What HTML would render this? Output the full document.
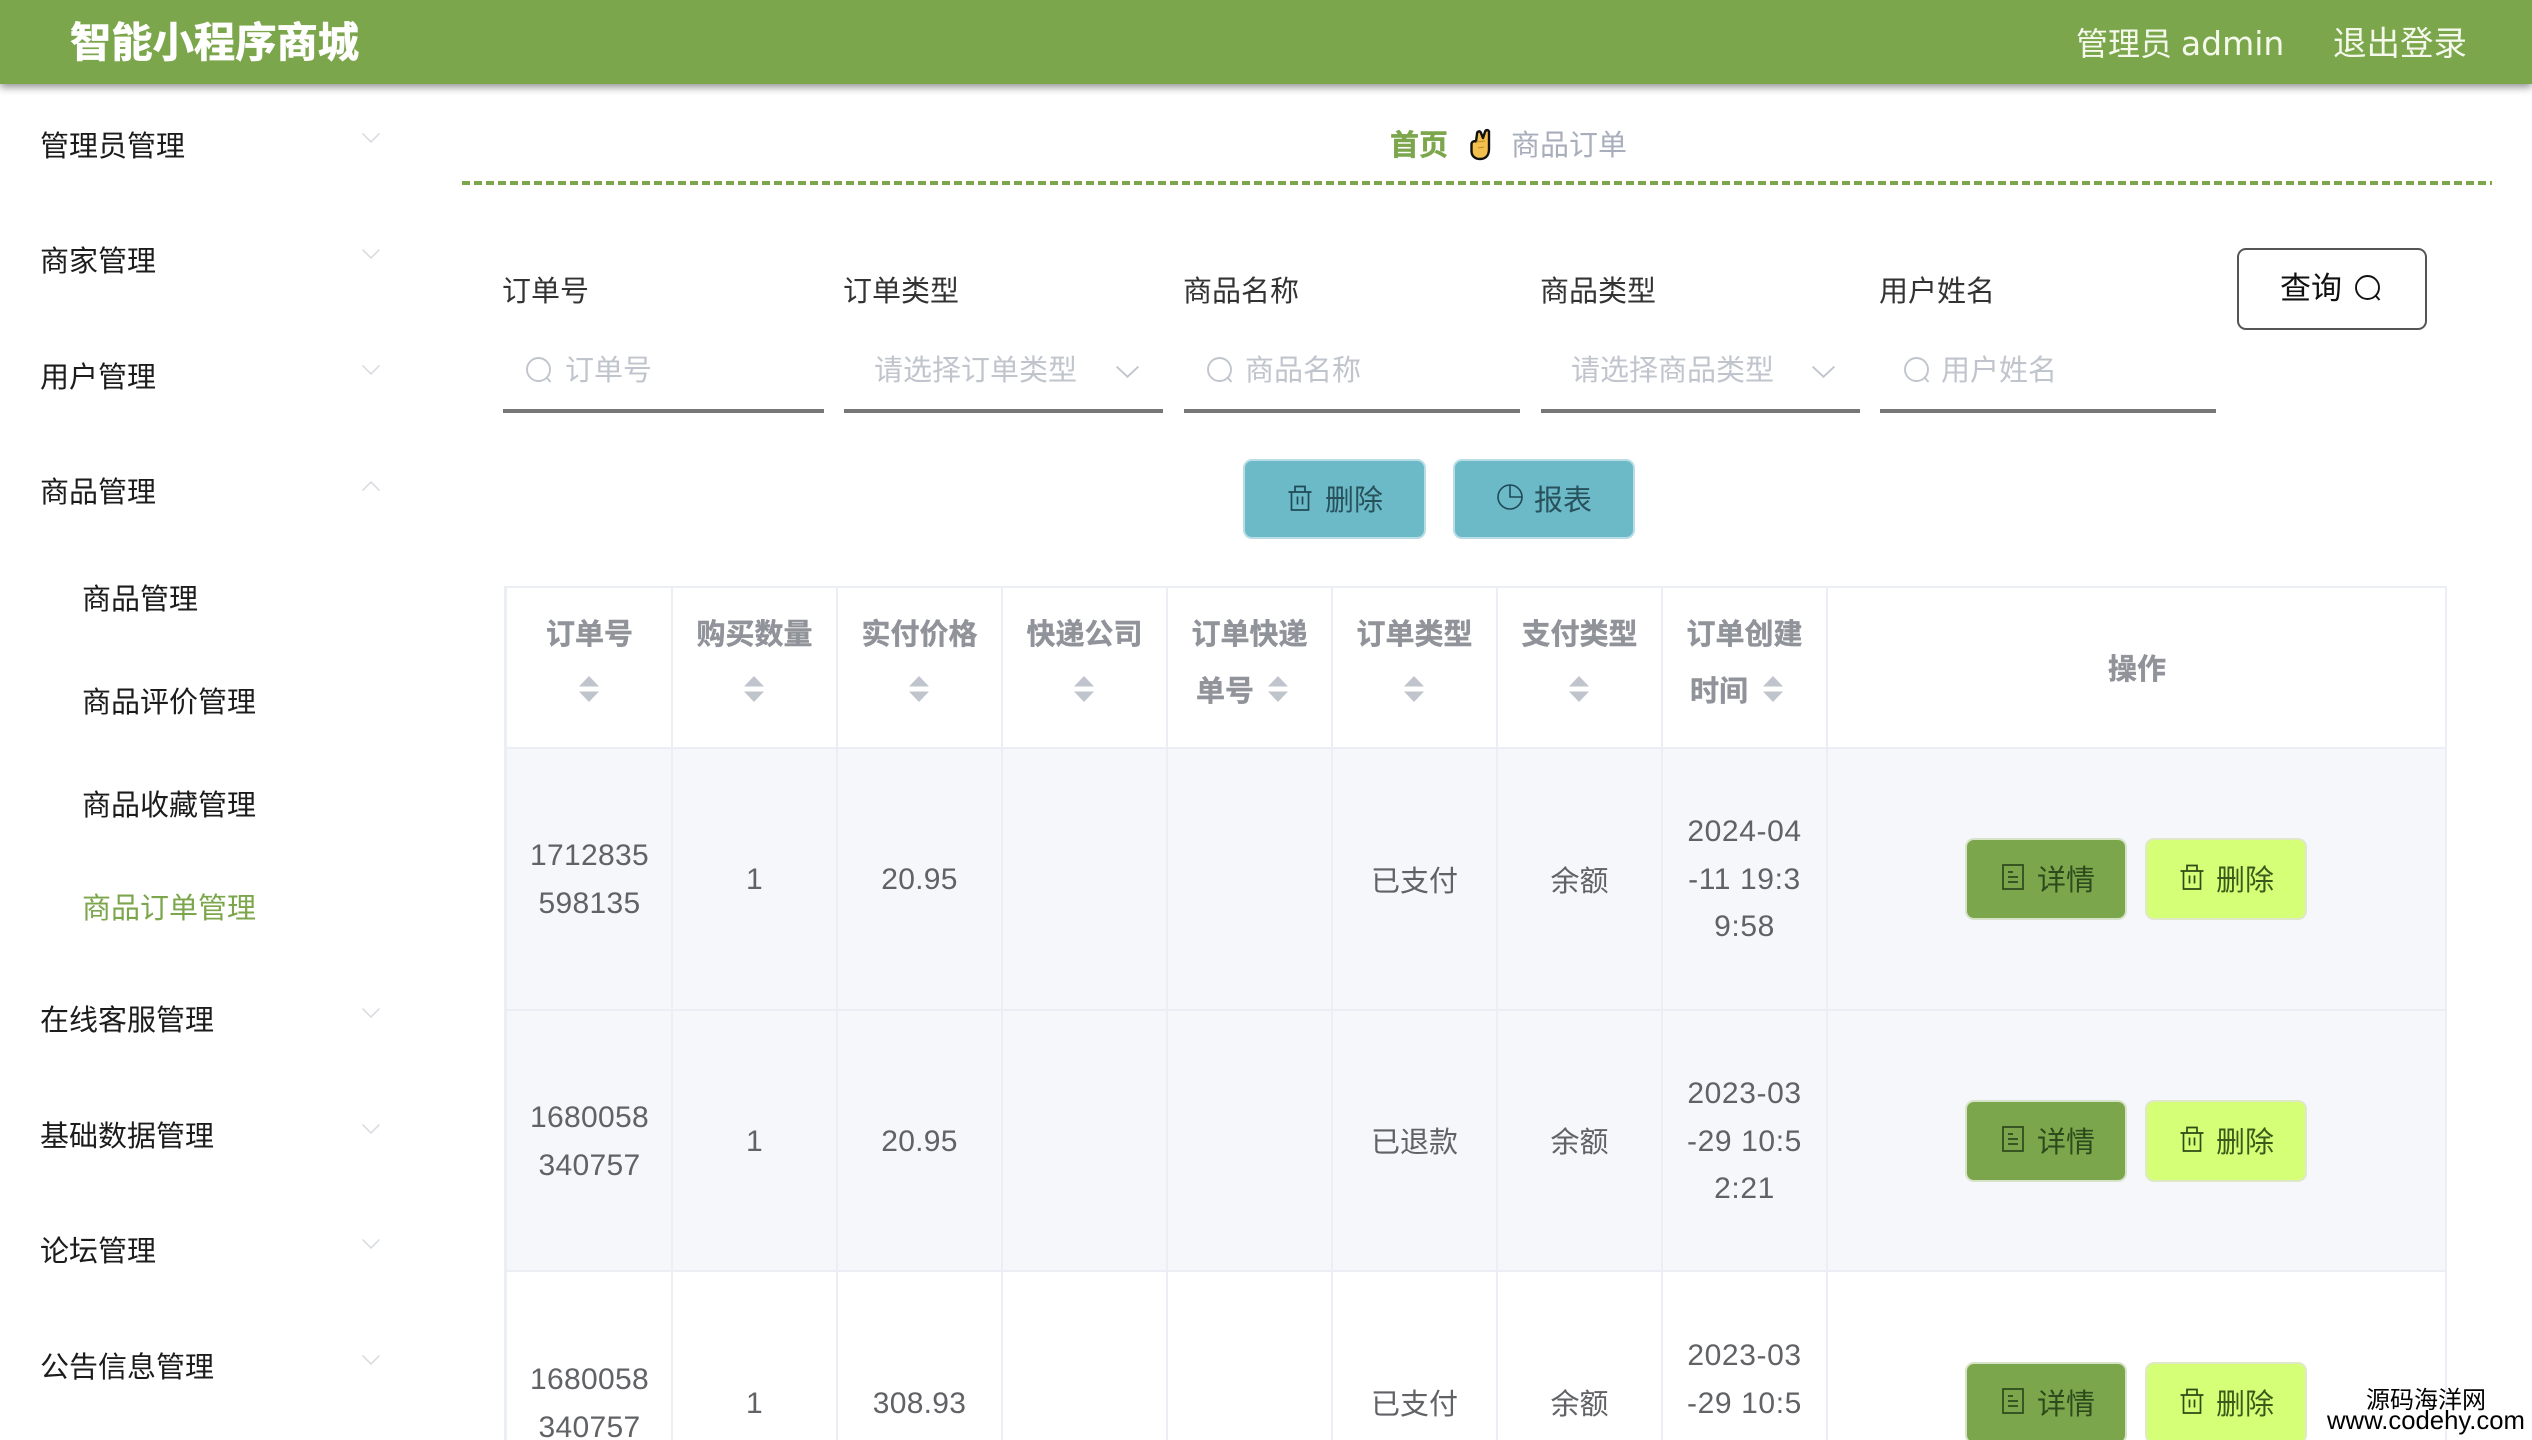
<!DOCTYPE html>
<html lang="zh-CN">
<head>
<meta charset="utf-8">
<title>智能小程序商城</title>
<style>
html,body{margin:0;padding:0;background:#fff;width:2532px;height:1440px;overflow:hidden}
body{position:relative;font-family:"Liberation Sans","Noto Sans CJK SC",sans-serif;font-size:29px;color:#333}
.a{position:absolute}
.t{position:absolute;white-space:nowrap;line-height:48px;height:48px;margin-top:2px}
.hd{position:absolute;left:0;top:0;width:2532px;height:84px;background:#7ca64c;box-shadow:0 3px 8px rgba(0,0,0,.45)}
.m{color:#1c1c1c;font-size:29px}
.lb{color:#333;font-size:29px}
.ph{color:#c0c4cc;font-size:29px}
.ul{position:absolute;top:409px;height:4px;background:#777}
.th{position:absolute;text-align:center;white-space:nowrap;line-height:48px;height:48px;margin-top:2px;font-weight:700;color:#909399;font-size:29px;-webkit-text-stroke:.4px #909399}
.td{position:absolute;text-align:center;white-space:nowrap;line-height:48px;height:48px;margin-top:1px;color:#606266;font-size:30px;letter-spacing:.3px}
.dt{letter-spacing:.6px}
.cj{font-size:29px;margin-top:2px;letter-spacing:0}
.vl{position:absolute;top:587px;height:853px;width:2px;background:#ebeef5}
.hl{position:absolute;left:504px;width:1943px;height:2px;background:#ebeef5}
.btn{position:absolute;box-sizing:border-box;border-radius:9px}
.tb{background:#6cb9c8;border:2px solid #b8dde5}
.bg{background:#7ca64c;border:2px solid #d6e3c9;height:82px;width:162px}
.by{background:#d5ff77;border:2px solid #dfe9c8;height:82px;width:162px}
svg{position:absolute;overflow:visible;fill:none}
.car{position:absolute;width:20px;height:26px}
</style>
</head>
<body>
<svg width="0" height="0" style="position:absolute">
<defs>
<symbol id="s" viewBox="0 0 26 26"><circle cx="12.500" cy="12.500" r="11.500" stroke="currentColor" stroke-width="1.900" fill="none"/><path d="M21 21l3.500 4" stroke="currentColor" stroke-width="1.900" fill="none"/></symbol>
<symbol id="tr" viewBox="0 0 24 26"><path d="M.5 7h23M3.500 7V25h17V7M7 7V1.500h10V7M9.500 11.500v8M14.500 11.500v8" stroke="currentColor" stroke-width="1.700" fill="none"/></symbol>
<symbol id="dc" viewBox="0 0 22 26"><path d="M1 1h20v24H1zM6 8h5M6 13h10M6 18h10" stroke="currentColor" stroke-width="1.700" fill="none"/></symbol>
<symbol id="pi" viewBox="0 0 26 26"><circle cx="13" cy="13" r="12" stroke="currentColor" stroke-width="1.600" fill="none"/><path d="M13 1v12h12" stroke="currentColor" stroke-width="1.600" fill="none"/></symbol>
<symbol id="cv" viewBox="0 0 18 10"><path d="M.5.5L9 9 17.500.5" stroke="currentColor" stroke-width="1.500" fill="none"/></symbol>
<symbol id="so" viewBox="0 0 20 26"><path d="M10 0l10 10.500H0zM0 15.500h20L10 26z" fill="#c0c4cc"/></symbol>
</defs>
</svg>

<div class="hd"></div>
<div class="t" style="left:70px;top:17px;font-size:41.300px;font-weight:700;color:#fff;-webkit-text-stroke:.7px #fff">智能小程序商城</div>
<div class="t" style="left:2076px;top:18px;font-size:32px;color:#f4f9ec">管理员 <span style="font-family:'DejaVu Sans',sans-serif;font-size:33px">admin</span></div>
<div class="t" style="left:2333px;top:19px;font-size:33.500px;color:#f4f9ec">退出登录</div>

<!-- sidebar -->
<div class="t m" style="left:40px;top:121px">管理员管理</div>
<svg style="left:362px;top:133px;color:#d6d9de" width="18" height="10"><use href="#cv"/></svg>
<div class="t m" style="left:40px;top:236px">商家管理</div>
<svg style="left:362px;top:249px;color:#d6d9de" width="18" height="10"><use href="#cv"/></svg>
<div class="t m" style="left:40px;top:352px">用户管理</div>
<svg style="left:362px;top:365px;color:#d6d9de" width="18" height="10"><use href="#cv"/></svg>
<div class="t m" style="left:40px;top:467px">商品管理</div>
<svg style="left:362px;top:481px;color:#d6d9de;transform:scaleY(-1)" width="18" height="10"><use href="#cv"/></svg>
<div class="t m" style="left:82px;top:574px">商品管理</div>
<div class="t m" style="left:82px;top:677px">商品评价管理</div>
<div class="t m" style="left:82px;top:780px">商品收藏管理</div>
<div class="t" style="left:82px;top:883px;color:#7ca64c">商品订单管理</div>
<div class="t m" style="left:40px;top:995px">在线客服管理</div>
<svg style="left:362px;top:1008px;color:#d6d9de" width="18" height="10"><use href="#cv"/></svg>
<div class="t m" style="left:40px;top:1111px">基础数据管理</div>
<svg style="left:362px;top:1124px;color:#d6d9de" width="18" height="10"><use href="#cv"/></svg>
<div class="t m" style="left:40px;top:1226px">论坛管理</div>
<svg style="left:362px;top:1239px;color:#d6d9de" width="18" height="10"><use href="#cv"/></svg>
<div class="t m" style="left:40px;top:1342px">公告信息管理</div>
<svg style="left:362px;top:1355px;color:#d6d9de" width="18" height="10"><use href="#cv"/></svg>

<!-- breadcrumb -->
<div class="t" style="left:1390px;top:120px;font-weight:700;color:#7ca64c;-webkit-text-stroke:.4px #7ca64c">首页</div>
<svg style="left:1470px;top:129px" width="20" height="31" viewBox="0 0 20 31"><path d="M6 12.500L7 5C7 2 10 1.500 11 4L13 9 15 3C15.500 .5 19 .5 19 3L19 20C19 26 16 30 10 30 5 30 1.500 27 1.500 22L1.500 15C1.500 13 4 11.500 6 12.500Z" fill="#f4c04d" stroke="#111" stroke-width="2.400" stroke-linejoin="round"/><path d="M6 13l9-1M8 19l6-1" stroke="#b98a2a" stroke-width="1"/></svg>
<div class="t" style="left:1511px;top:120px;color:#a8aebb">商品订单</div>
<div class="a" style="left:462px;top:181px;width:2030px;height:4px;background:repeating-linear-gradient(90deg,#7ca64c 0 8px,transparent 8px 12px)"></div>

<!-- filter -->
<div class="t lb" style="left:502px;top:266px">订单号</div>
<div class="t lb" style="left:843px;top:266px">订单类型</div>
<div class="t lb" style="left:1183px;top:266px">商品名称</div>
<div class="t lb" style="left:1540px;top:266px">商品类型</div>
<div class="t lb" style="left:1879px;top:266px">用户姓名</div>

<svg style="left:526px;top:357px;color:#c0c4cc" width="26" height="26"><use href="#s"/></svg>
<div class="t ph" style="left:565px;top:345px">订单号</div>
<div class="t ph" style="left:874px;top:345px">请选择订单类型</div>
<svg style="left:1116px;top:366px;color:#c0c4cc" width="23" height="12" viewBox="0 0 18 10" preserveAspectRatio="none"><use href="#cv"/></svg>
<svg style="left:1207px;top:357px;color:#c0c4cc" width="26" height="26"><use href="#s"/></svg>
<div class="t ph" style="left:1245px;top:345px">商品名称</div>
<div class="t ph" style="left:1571px;top:345px">请选择商品类型</div>
<svg style="left:1812px;top:366px;color:#c0c4cc" width="23" height="12" viewBox="0 0 18 10" preserveAspectRatio="none"><use href="#cv"/></svg>
<svg style="left:1904px;top:357px;color:#c0c4cc" width="26" height="26"><use href="#s"/></svg>
<div class="t ph" style="left:1941px;top:345px">用户姓名</div>

<div class="ul" style="left:503px;width:321px"></div>
<div class="ul" style="left:844px;width:319px"></div>
<div class="ul" style="left:1184px;width:336px"></div>
<div class="ul" style="left:1541px;width:319px"></div>
<div class="ul" style="left:1880px;width:336px"></div>

<div class="btn" style="left:2237px;top:248px;width:190px;height:82px;border:2px solid #555;background:#fff"></div>
<div class="t" style="left:2280px;top:263px;font-size:31px;color:#111">查询</div>
<svg style="left:2355px;top:275px;color:#111" width="26" height="26"><use href="#s"/></svg>

<!-- action buttons -->
<div class="btn tb" style="left:1243px;top:459px;width:183px;height:80px"></div>
<svg style="left:1288px;top:485px;color:#1e4a55" width="24" height="26"><use href="#tr"/></svg>
<div class="t" style="left:1325px;top:475px;color:#27525c">删除</div>
<div class="btn tb" style="left:1453px;top:459px;width:182px;height:80px"></div>
<svg style="left:1497px;top:484px;color:#1e4a55" width="26" height="26"><use href="#pi"/></svg>
<div class="t" style="left:1534px;top:475px;color:#27525c">报表</div>

<!-- table -->
<div class="a" style="left:504px;top:749px;width:1943px;height:523px;background:#f5f7fa"></div>
<div class="hl" style="top:586px"></div>
<div class="hl" style="top:747px"></div>
<div class="hl" style="top:1009px"></div>
<div class="hl" style="top:1270px"></div>
<div class="vl" style="left:504px;width:3px"></div>
<div class="vl" style="left:671px"></div>
<div class="vl" style="left:836px"></div>
<div class="vl" style="left:1001px"></div>
<div class="vl" style="left:1166px"></div>
<div class="vl" style="left:1331px"></div>
<div class="vl" style="left:1496px"></div>
<div class="vl" style="left:1661px"></div>
<div class="vl" style="left:1826px"></div>
<div class="vl" style="left:2445px"></div>

<div class="th" style="left:507px;width:165px;top:609px">订单号</div>
<div class="th" style="left:672px;width:165px;top:609px">购买数量</div>
<div class="th" style="left:837px;width:165px;top:609px">实付价格</div>
<div class="th" style="left:1002px;width:165px;top:609px">快递公司</div>
<div class="th" style="left:1167px;width:165px;top:609px">订单快递</div>
<div class="th" style="left:1196px;top:666px">单号</div>
<div class="th" style="left:1332px;width:165px;top:609px">订单类型</div>
<div class="th" style="left:1497px;width:165px;top:609px">支付类型</div>
<div class="th" style="left:1662px;width:165px;top:609px">订单创建</div>
<div class="th" style="left:1690px;top:666px">时间</div>
<div class="th" style="left:1829px;width:616px;top:644px">操作</div>

<svg class="car" style="left:579px;top:676px" width="20" height="26"><use href="#so"/></svg>
<svg class="car" style="left:744px;top:676px" width="20" height="26"><use href="#so"/></svg>
<svg class="car" style="left:909px;top:676px" width="20" height="26"><use href="#so"/></svg>
<svg class="car" style="left:1074px;top:676px" width="20" height="26"><use href="#so"/></svg>
<svg class="car" style="left:1268px;top:676px" width="20" height="26"><use href="#so"/></svg>
<svg class="car" style="left:1404px;top:676px" width="20" height="26"><use href="#so"/></svg>
<svg class="car" style="left:1569px;top:676px" width="20" height="26"><use href="#so"/></svg>
<svg class="car" style="left:1763px;top:676px" width="20" height="26"><use href="#so"/></svg>

<!-- row 1 -->
<div class="td" style="left:507px;width:165px;top:831px">1712835</div>
<div class="td" style="left:507px;width:165px;top:879px">598135</div>
<div class="td" style="left:672px;width:165px;top:855px">1</div>
<div class="td" style="left:837px;width:165px;top:855px">20.95</div>
<div class="td cj" style="left:1332px;width:165px;top:856px">已支付</div>
<div class="td cj" style="left:1497px;width:165px;top:856px">余额</div>
<div class="td dt" style="left:1662px;width:165px;top:807px">2024-04</div>
<div class="td dt" style="left:1662px;width:165px;top:855px">-11 19:3</div>
<div class="td dt" style="left:1662px;width:165px;top:902px">9:58</div>
<div class="btn bg" style="left:1965px;top:838px"></div>
<svg style="left:2002px;top:864px;color:#2d4a1c" width="22" height="26"><use href="#dc"/></svg>
<div class="t" style="left:2037px;top:855px;color:#2d4a1c">详情</div>
<div class="btn by" style="left:2145px;top:838px"></div>
<svg style="left:2180px;top:864px;color:#2f4a14" width="24" height="26"><use href="#tr"/></svg>
<div class="t" style="left:2216px;top:855px;color:#3a5a1c">删除</div>

<!-- row 2 -->
<div class="td" style="left:507px;width:165px;top:1093px">1680058</div>
<div class="td" style="left:507px;width:165px;top:1141px">340757</div>
<div class="td" style="left:672px;width:165px;top:1117px">1</div>
<div class="td" style="left:837px;width:165px;top:1117px">20.95</div>
<div class="td cj" style="left:1332px;width:165px;top:1117px">已退款</div>
<div class="td cj" style="left:1497px;width:165px;top:1117px">余额</div>
<div class="td dt" style="left:1662px;width:165px;top:1069px">2023-03</div>
<div class="td dt" style="left:1662px;width:165px;top:1117px">-29 10:5</div>
<div class="td dt" style="left:1662px;width:165px;top:1164px">2:21</div>
<div class="btn bg" style="left:1965px;top:1100px"></div>
<svg style="left:2002px;top:1126px;color:#2d4a1c" width="22" height="26"><use href="#dc"/></svg>
<div class="t" style="left:2037px;top:1117px;color:#2d4a1c">详情</div>
<div class="btn by" style="left:2145px;top:1100px"></div>
<svg style="left:2180px;top:1126px;color:#2f4a14" width="24" height="26"><use href="#tr"/></svg>
<div class="t" style="left:2216px;top:1117px;color:#3a5a1c">删除</div>

<!-- row 3 -->
<div class="td" style="left:507px;width:165px;top:1355px">1680058</div>
<div class="td" style="left:507px;width:165px;top:1403px">340757</div>
<div class="td" style="left:672px;width:165px;top:1379px">1</div>
<div class="td" style="left:837px;width:165px;top:1379px">308.93</div>
<div class="td cj" style="left:1332px;width:165px;top:1379px">已支付</div>
<div class="td cj" style="left:1497px;width:165px;top:1379px">余额</div>
<div class="td dt" style="left:1662px;width:165px;top:1331px">2023-03</div>
<div class="td dt" style="left:1662px;width:165px;top:1379px">-29 10:5</div>
<div class="td dt" style="left:1662px;width:165px;top:1427px">3:01</div>
<div class="btn bg" style="left:1965px;top:1362px"></div>
<svg style="left:2002px;top:1388px;color:#2d4a1c" width="22" height="26"><use href="#dc"/></svg>
<div class="t" style="left:2037px;top:1379px;color:#2d4a1c">详情</div>
<div class="btn by" style="left:2145px;top:1362px"></div>
<svg style="left:2180px;top:1388px;color:#2f4a14" width="24" height="26"><use href="#tr"/></svg>
<div class="t" style="left:2216px;top:1379px;color:#3a5a1c">删除</div>

<!-- watermark -->
<div class="t" style="left:2366px;top:1375px;font-size:24px;color:#000">源码海洋网</div>
<div class="t" style="left:2327px;top:1395px;font-size:25.700px;color:#000">www.codehy.com</div>
</body>
</html>
